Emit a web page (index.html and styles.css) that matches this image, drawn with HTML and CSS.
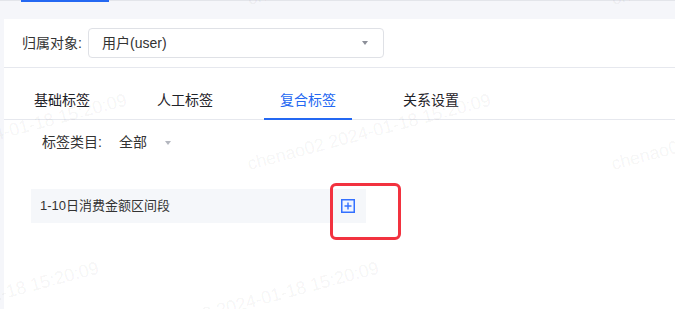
FILE: index.html
```html
<!DOCTYPE html>
<html lang="zh-CN">
<head>
<meta charset="utf-8">
<title>复合标签</title>
<link rel="stylesheet" href="styles.css">
</head>
<body>
<div class="topbar"><div class="top-indicator"></div></div>
<main class="panel">
  <div class="owner-row">
    <span class="owner-label">归属对象:</span>
    <div class="select">
      <span class="select-text">用户(user)</span>
      <span class="caret"></span>
    </div>
  </div>
  <nav class="tabs">
    <div class="tab">基础标签</div>
    <div class="tab">人工标签</div>
    <div class="tab active">复合标签</div>
    <div class="tab">关系设置</div>
  </nav>
  <div class="filter-row">
    <span class="filter-label">标签类目:</span>
    <span class="filter-value">全部</span>
    <span class="caret light"></span>
  </div>
  <div class="card">
    <span class="card-text">1-10日消费金额区间段</span>
    <span class="plus-icon">
      <svg width="14" height="14" viewBox="0 0 14 14"><rect x="0.75" y="0.75" width="12.5" height="12.5" fill="#f0f5ff" stroke="#3370ff" stroke-width="1.5"/><path d="M7 3.5V10.5M3.5 7H10.5" stroke="#3370ff" stroke-width="1.4"/></svg>
    </span>
  </div>
</main>
<div class="highlight"></div>
<div class="watermarks">
  <span class="wm" style="left:250px;top:8px">chenao02 2024-01-18 15:20:09</span>
  <span class="wm" style="left:614px;top:8px">chenao02 2024-01-18 15:20:09</span>
  <span class="wm" style="left:-114px;top:173px">chenao02 2024-01-18 15:20:09</span>
  <span class="wm" style="left:250px;top:173px">chenao02 2024-01-18 15:20:09</span>
  <span class="wm" style="left:614px;top:173px">chenao02 2024-01-18 15:20:09</span>
  <span class="wm" style="left:-142px;top:341px">chenao02 2024-01-18 15:20:09</span>
  <span class="wm" style="left:138px;top:341px">chenao02 2024-01-18 15:20:09</span>
</div>
</body>
</html>
```
FILE: styles.css
```css
* { box-sizing: border-box; }
html, body { margin: 0; padding: 0; }
body {
  width: 675px;
  height: 309px;
  overflow: hidden;
  background: #f5f6fa;
  font-family: "Liberation Sans", "Noto Sans CJK SC", sans-serif;
  font-size: 14px;
  color: #333;
  position: relative;
}
.topbar {
  height: 19px;
  box-shadow: inset 0 1px 0 #e3e5ea;
  padding-left: 21px;
}
.top-indicator {
  width: 88px;
  height: 2px;
  background: #2468f2;
}
.panel {
  margin-left: 4px;
  height: 290px;
  background: #fff;
}
.owner-row {
  height: 49px;
  display: flex;
  align-items: center;
  padding-left: 18px;
  padding-bottom: 1px;
  border-bottom: 1px solid #e6e8ee;
}
.owner-label {
  width: 66px;
  line-height: 20px;
  color: #333;
}
.select {
  width: 296px;
  height: 30px;
  border: 1px solid #dfe1e6;
  border-radius: 4px;
  display: flex;
  align-items: center;
  justify-content: space-between;
  padding: 0 15px 0 13px;
}
.select-text { color: #333; line-height: 20px; }
.caret {
  width: 0;
  height: 0;
  border-left: 3.5px solid transparent;
  border-right: 3.5px solid transparent;
  border-top: 4px solid #8c8f99;
}
.caret.light { border-top-color: #b4b7bf; margin-left: 18px; margin-top: 2px; }
.tabs {
  display: flex;
  gap: 35px;
  padding-left: 14px;
  height: 52px;
  border-bottom: 1px solid #e6e8ee;
}
.tab {
  position: relative;
  width: 88px;
  text-align: center;
  padding-top: 22px;
  line-height: 20px;
  color: #1f2329;
}
.tab.active { color: #2468f2; }
.tab.active::after {
  content: "";
  position: absolute;
  left: 0;
  right: 0;
  bottom: -1px;
  height: 2px;
  background: #2468f2;
}
.filter-row {
  display: flex;
  align-items: center;
  padding: 12px 0 0 38px;
  height: 32px;
  line-height: 20px;
}
.filter-label { width: 77px; color: #333; }
.filter-value { color: #333; }
.card {
  margin: 37px 0 0 27px;
  width: 335px;
  height: 34px;
  background: #f5f7fa;
  display: flex;
  align-items: center;
  justify-content: space-between;
  padding: 0 11px 0 9px;
}
.card-text { font-size: 13px; color: #333; line-height: 20px; }
.plus-icon { display: flex; width: 14px; height: 14px; }
.highlight {
  position: absolute;
  left: 330px;
  top: 183px;
  width: 71px;
  height: 57px;
  border: 3px solid #f2323f;
  border-radius: 6px;
}
.watermarks {
  position: absolute;
  inset: 0;
  pointer-events: none;
  overflow: hidden;
}
.wm {
  position: absolute;
  font-family: "Liberation Sans", sans-serif;
  font-size: 18px;
  line-height: 18px;
  white-space: nowrap;
  color: rgba(0, 0, 0, 0.055);
  transform-origin: 0 100%;
  transform: translateY(-18px) rotate(-15deg);
}
```
